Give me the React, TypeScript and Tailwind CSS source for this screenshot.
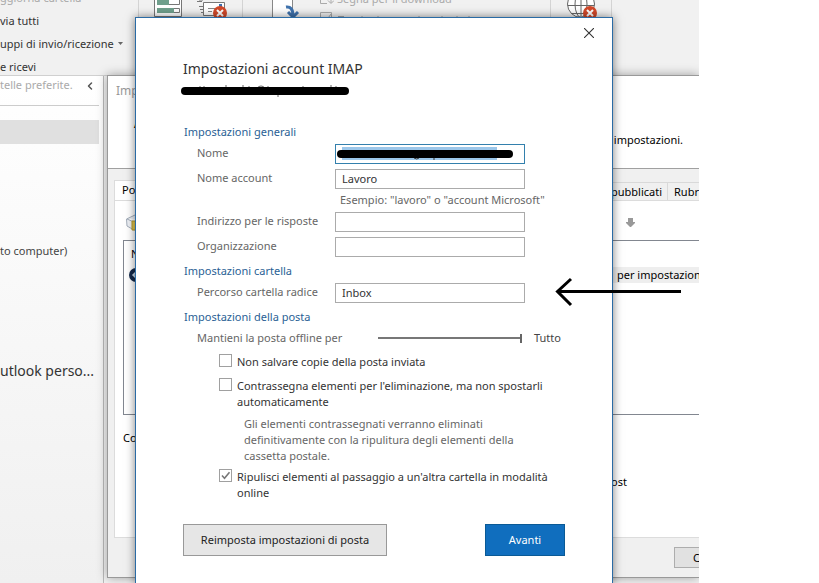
import type { ReactNode } from "react"
import { ChevronLeft } from "lucide-react"

type FieldProps = {
  id: string
  label: string
  value?: string
}

const Field = ({ id, label, value }: FieldProps) => (
  <div className="flex items-start pl-[13px]">
    <label htmlFor={id} className="w-[138px] shrink-0 leading-[18px] text-[#666]">
      {label}
    </label>
    <input
      id={id}
      type="text"
      defaultValue={value}
      className="h-5 w-[190px] border border-[#ababab] bg-white px-1.5 pb-0.5 text-[11px] text-[#333] outline-none"
    />
  </div>
)

const Heading = ({ children }: { children: ReactNode }) => (
  <h2 className="text-[#2a5f95]">{children}</h2>
)

type CheckProps = {
  id: string
  checked?: boolean
  children: ReactNode
}

const Check = ({ id, checked, children }: CheckProps) => (
  <div className="flex items-start gap-[5px] pl-[35px] text-[#333]">
    <span className="relative flex shrink-0">
      <input
        id={id}
        type="checkbox"
        defaultChecked={checked}
        className="peer h-[13px] w-[13px] appearance-none border border-[#a0a0a0] bg-white"
      />
      <svg
        viewBox="0 0 13 13"
        className="pointer-events-none absolute inset-0 hidden h-[13px] w-[13px] peer-checked:block"
      >
        <path d="M3 6.5 5.5 9.2 10.5 3.2" fill="none" stroke="#777" strokeWidth="1.6" />
      </svg>
    </span>
    <label htmlFor={id}>{children}</label>
  </div>
)

const ServerIcon = () => (
  <svg viewBox="0 0 28 17" className="h-[17px] w-7 shrink-0">
    <path d="M.5 0V16.5H27.5V0" fill="#fff" stroke="#777" />
    <path d="M3.5 0V4.5H25.5V0M3.5 8.5H25.5V12.5H3.5Z" fill="#fff" stroke="#777" />
    <path d="M3 0H15V5H3ZM3 8H20V13H3Z" fill="#6f9f8c" />
  </svg>
)

const MailErrorIcon = () => (
  <svg viewBox="0 0 32 19" className="h-[19px] w-8 shrink-0">
    <path d="M2 0H6M0 1.5H5M2 6.5H6M3 9.5H6M4 12.5H6" stroke="#777" />
    <path d="M6.500 2.5H27.5V15.5H6.500Z" fill="#fff" stroke="#777" />
    <path d="M11 8.5H18M11 11.5H15" stroke="#888" />
    <path d="M22 4H25V7H22Z" fill="#3f6fad" />
    <circle cx="23" cy="13" r="7" fill="#d2492a" />
    <path d="M20 10 26 16M26 10 20 16" stroke="#fff" strokeWidth="2" />
  </svg>
)

const GlobeErrorIcon = () => (
  <svg viewBox="0 0 30 19" className="h-[19px] w-[30px] shrink-0">
    <g fill="none" stroke="#666">
      <circle cx="14" cy="4" r="13.5" fill="#fff" />
      <ellipse cx="14" cy="4" rx="6" ry="13.5" />
      <path d="M14 0V18M.5 5.5H27.5M4 13.5H24" />
    </g>
    <circle cx="23" cy="13" r="7" fill="#d2492a" />
    <path d="M20 10 26 16M26 10 20 16" stroke="#fff" strokeWidth="2" />
  </svg>
)

const Ribbon = () => (
  <div className="flex h-[76px] overflow-hidden border-b border-[#d0d0d0] bg-[#f1f1f1] text-[#333]">
    <div className="-mt-[14px] flex w-[138px] shrink-0 flex-col whitespace-nowrap leading-[23px]">
      <span className="text-[#aaa]">ggiorna cartella</span>
      <span>via tutti</span>
      <span className="flex items-center gap-1">
        uppi di invio/ricezione
        <svg viewBox="0 0 5 3" className="h-[3px] w-[5px]">
          <path d="M0 0H5L2.5 3Z" fill="#666" />
        </svg>
      </span>
      <span>e ricevi</span>
    </div>
    <div className="flex w-[105px] shrink-0 items-start gap-[15px] border-x border-[#d4d4d4] pl-[15px]">
      <ServerIcon />
      <MailErrorIcon />
    </div>
    <div className="flex grow items-start gap-5 pl-[29px] text-[#aaa]">
      <svg viewBox="0 0 28 19" className="h-[19px] w-7 shrink-0">
        <path d="M.5 0V18H20.5V0" fill="#fff" stroke="#888" />
        <path d="M14 7Q21 6 21 16M16 12 21 17 26 12" fill="none" stroke="#3f72ad" strokeWidth="3" />
      </svg>
      <div className="-mt-[9px] flex flex-col whitespace-nowrap">
        <span className="flex gap-[3px]">
          <svg viewBox="0 0 14 16" className="h-4 w-3.5">
            <path d="M.5 5V12.5H7M11 4V12M8 9.5 11 12.5 14 9.5" fill="none" stroke="#aaa" />
          </svg>
          Segna per il download
        </span>
        <svg viewBox="0 0 160 12" className="mt-[5px] h-3 w-40">
          <path d="M.5 12V.5H11.5V12M3 6 6 9 11 2" fill="none" stroke="#aaa" />
          <path d="M18 4.500H24M42 4V8M58 4V8M99 4V8M122 4V8M137 4V8M149 4V8" fill="none" stroke="#aaa" />
        </svg>
      </div>
    </div>
    <div className="w-[62px] shrink-0 border-x border-[#d4d4d4] pl-4">
      <GlobeErrorIcon />
    </div>
    <div className="w-[87px] shrink-0" />
  </div>
)

const FolderPane = () => (
  <aside className="w-[104px] shrink-0 overflow-hidden whitespace-nowrap border-r border-[#bbb] bg-linear-to-b from-white to-[#f0f0f0] text-[#444]">
    <div className="mr-1 flex h-[30px] items-start justify-between border-b border-[#ccc] pt-px">
      <span className="text-[#aaa]">telle preferite.</span>
      <button type="button" aria-label="Comprimi" className="pr-[3px] pt-[3px] text-[#555]">
        <ChevronLeft size={12} strokeWidth={3} />
      </button>
    </div>
    <div className="mr-1 mt-[14px] h-6 bg-[#e0e0e0]" />
    <p className="mt-[99px]">to computer)</p>
    <p className="mt-[102px] text-[14px] leading-5 text-[#333]">utlook perso...</p>
  </aside>
)

const AccountWindow = () => (
  <section className="absolute bottom-[5px] left-[107px] right-0 top-[75px] flex flex-col border border-r-0 border-[#999] bg-[#f0f0f0] text-black shadow-[0_0_10px_rgba(0,0,0,0.35)]">
    <header className="flex h-[93px] shrink-0 flex-col border-b border-[#a0a0a0] bg-white">
      <span className="pl-2 pt-[7px] text-[12px] text-[#999]">Imp</span>
      <span className="pl-[26px] pt-[17px] font-bold">A</span>
      <span className="self-end pr-4">impostazioni.</span>
    </header>
    <div className="ml-1.5 mt-[11px] flex h-5 shrink-0 items-end justify-between overflow-hidden">
      <div role="tab" className="h-5 w-[60px] border border-b-0 border-[#dcdcdc] bg-white pl-[7px] pt-px">
        Po
      </div>
      <div className="flex h-[18px] w-[91px] justify-end whitespace-nowrap border-t border-[#d9d9d9]">
        <div role="tab" className="shrink-0 border-r border-[#d9d9d9] pr-[5px] pt-px">pubblicati</div>
        <div role="tab" className="w-[31px] shrink-0 pl-1.5 pt-px">Rubr</div>
      </div>
    </div>
    <div className="ml-1.5 flex grow flex-col border border-r-0 border-[#dcdcdc] bg-white pl-2">
      <div className="flex h-[39px] shrink-0 items-center justify-between pl-[3px] pr-16 pt-1">
        <svg viewBox="0 0 18 18" className="h-[18px] w-[18px]">
          <path d="M.5 5 9 1 17 5V13L8 16 1 12ZM1 5 8 8 17 5M8 8V16" fill="#eef1f6" stroke="#a3adba" />
          <path d="M6 7H14V16H6Z" fill="#e5c84c" stroke="#b69a2e" />
        </svg>
        <svg viewBox="0 0 9 9" className="h-[9px] w-[9px]">
          <path d="M2 0H7V4H9V5L5 9H4L0 5V4H2Z" fill="#999" />
        </svg>
      </div>
      <div className="flex h-[175px] shrink-0 flex-col border border-r-0 border-[#828790] pl-[5px] pt-[5px]">
        <span className="pl-0.5">N</span>
        <div className="mt-[5px] flex items-center justify-between">
          <svg viewBox="0 0 14 14" className="h-3.5 w-3.5">
            <circle cx="7" cy="7" r="7" fill="#13294b" />
            <path d="M3 7 7 3V5.500L5.500 7 7 8.500V11Z" fill="#cfe3f5" />
          </svg>
          <span className="w-[86px] overflow-hidden whitespace-nowrap bg-[#eee] pl-1">per impostazion</span>
        </div>
      </div>
      <span className="pt-[15px]">Co</span>
      <span className="self-end pr-[72px] pt-7">ost</span>
    </div>
    <footer className="flex h-[39px] shrink-0 items-center justify-end overflow-hidden">
      <button type="button" className="h-[21px] w-[25px] border border-r-0 border-[#adadad] bg-[#e1e1e1] pl-[18px] text-left">
        C
      </button>
    </footer>
  </section>
)

const ImapDialog = () => (
  <form className="absolute bottom-0 left-[135px] top-[17px] flex w-[478px] flex-col border border-b-0 border-[#2a6ba5] bg-white px-[47px] pt-[39px] shadow-[0_0_9px_rgba(0,0,0,0.5)]">
    <button type="button" aria-label="Chiudi" className="absolute right-[18px] top-2.5">
      <svg viewBox="0 0 10 10" className="h-2.5 w-2.5">
        <path d="M0 0 10 10M10 0 0 10" stroke="#333" strokeWidth="1.1" />
      </svg>
    </button>

    <h1 className="text-[14px] leading-6 text-[#333]">Impostazioni account IMAP</h1>
    <svg viewBox="0 0 168 16" className="-ml-0.5 h-4 w-[168px]">
      <path
        d="M19 5V7M23 5V7M45 4V7M62 4V7M68 5V6M76 7Q80 3 84 7M87 5V7M122 5V7M150 4V7M155 5V7M97 13V16"
        fill="none"
        stroke="#666"
      />
      <path d="M4 10H164" stroke="#000" strokeWidth="8" strokeLinecap="round" />
    </svg>

    <div className="flex flex-col pl-px pt-[27px]">
      <Heading>Impostazioni generali</Heading>
      <div className="mt-1 flex items-start pl-[13px]">
        <label htmlFor="nome" className="w-[138px] shrink-0 leading-[18px] text-[#666]">
          Nome
        </label>
        <span className="relative flex">
          <input
            id="nome"
            type="text"
            className="h-5 w-[190px] border border-[#3380ad] bg-white outline-none"
          />
          <svg viewBox="0 0 190 20" className="pointer-events-none absolute inset-0 h-5 w-[190px]">
            <path d="M7 3H162V16H7Z" fill="#9cc7ea" />
            <path d="M79 14Q82 16 84 14M99 13V16" fill="none" stroke="#333" />
            <path d="M6 10H174" stroke="#000" strokeWidth="8" strokeLinecap="round" />
          </svg>
        </span>
      </div>
      <div className="mt-[5px]">
        <Field id="account" label="Nome account" value="Lavoro" />
      </div>
      <p className="mt-[3px] pl-[156px] text-[#666]">Esempio: "lavoro" o "account Microsoft"</p>
      <div className="mt-1 flex flex-col gap-[5px]">
        <Field id="risposte" label="Indirizzo per le risposte" />
        <Field id="organizzazione" label="Organizzazione" />
      </div>
    </div>

    <div className="mt-1.5 flex flex-col gap-1 pl-px">
      <Heading>Impostazioni cartella</Heading>
      <Field id="radice" label="Percorso cartella radice" value="Inbox" />
    </div>

    <div className="mt-1.5 flex flex-col pl-px">
      <Heading>Impostazioni della posta</Heading>
      <div className="mt-[5px] flex items-center pl-[13px]">
        <label htmlFor="offline" className="w-[181px] shrink-0 text-[#666]">
          Mantieni la posta offline per
        </label>
        <input
          id="offline"
          type="range"
          defaultValue={100}
          className="h-[9px] w-36 appearance-none bg-[linear-gradient(#777,#777)] bg-[length:100%_2px] bg-center bg-no-repeat [&::-webkit-slider-thumb]:h-[9px] [&::-webkit-slider-thumb]:w-0.5 [&::-webkit-slider-thumb]:appearance-none [&::-webkit-slider-thumb]:bg-[#666]"
        />
        <span className="pl-3 text-[#444]">Tutto</span>
      </div>
      <div className="mt-2 flex flex-col gap-2">
        <Check id="copie">Non salvare copie della posta inviata</Check>
        <Check id="elimina">
          Contrassegna elementi per l'eliminazione, ma non spostarli
          <br />
          automaticamente
        </Check>
      </div>
      <p className="mt-1.5 pl-[60px] text-[#666]">
        Gli elementi contrassegnati verranno eliminati
        <br />
        definitivamente con la ripulitura degli elementi della
        <br />
        cassetta postale.
      </p>
      <div className="mt-[5px]">
        <Check id="ripulisci" checked>
          Ripulisci elementi al passaggio a un'altra cartella in modalità
          <br />
          online
        </Check>
      </div>
    </div>

    <div className="mt-[23px] flex justify-between">
      <button type="button" className="h-8 w-[204px] border border-[#999] bg-[#e6e6e6] text-[#222]">
        Reimposta impostazioni di posta
      </button>
      <button type="submit" className="h-8 w-20 border border-[#0a5a96] bg-[#106ebe] text-white">
        Avanti
      </button>
    </div>
  </form>
)

export default function App() {
  return (
    <div className="h-screen overflow-hidden bg-white pr-[120px] font-['Noto_Sans','Open_Sans',sans-serif] text-[11px] leading-4">
      <main className="relative flex h-full flex-col overflow-hidden bg-[#f3f3f3]">
        <Ribbon />
        <div className="flex grow">
          <FolderPane />
        </div>
        <AccountWindow />
        <ImapDialog />
        <svg viewBox="0 0 128 30" className="absolute left-[555px] top-[277px] h-[30px] w-32">
          <path d="M126 14.5H3M16 2 2.5 14.5 16 28" fill="none" stroke="#000" strokeWidth="3" />
        </svg>
      </main>
    </div>
  )
}
